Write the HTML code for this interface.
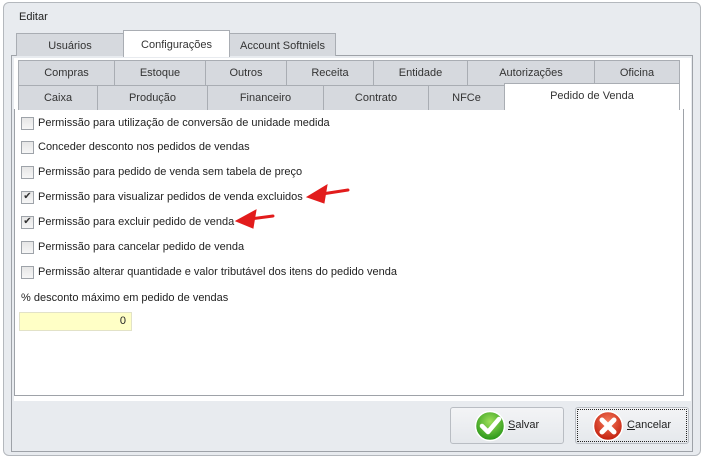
<!DOCTYPE html>
<html><head><meta charset="utf-8"><style>
*{margin:0;padding:0;box-sizing:border-box}
body{width:703px;height:459px;background:#fff;font-family:"Liberation Sans",sans-serif;font-size:11px;color:#222;position:relative;overflow:hidden}
.a{position:absolute}
.win{left:3px;top:2px;width:698px;height:454px;background:#e8ebef;border:1px solid #b4b8bd;border-radius:6px}
.tab{position:absolute;background:#d6d9de;border:1px solid #a9adb3;border-bottom:none;text-align:center;color:#333;font-size:11px}
.sel{background:#fff}
.cb{position:absolute;left:21px;width:13px;height:13px;border:1px solid #9ea3a9;background:linear-gradient(#e6e6e6,#f6f6f6)}
.lb{position:absolute;left:38px;font-size:11px;color:#222;white-space:nowrap}
.btn{position:absolute;top:407px;width:114px;height:37px;border:1px solid #b9bdc3;border-radius:3px;background:linear-gradient(#f3f4f6,#e5e8ec);font-size:11px}
</style></head><body>
<div class="a win"></div>
<div class="a" style="left:19px;top:11px;font-size:11px;color:#222">Editar</div>
<div class="a" style="left:11px;top:55px;width:682px;height:397px;border:1px solid #9ea2a8;background:#e8ebef"></div>
<div class="tab" style="left:16px;top:33px;width:108px;height:23px;line-height:24px">Usuários</div>
<div class="tab" style="left:229px;top:33px;width:107px;height:23px;line-height:24px">Account Softniels</div>
<div class="tab sel" style="left:123px;top:30px;width:107px;height:27px;line-height:28px;z-index:2">Configurações</div>
<div class="a" style="left:14px;top:58px;width:677px;height:343px;background:#fff"></div>
<div class="a" style="left:14px;top:109px;width:670px;height:287px;border:1px solid #9ea2a8;border-top:none;background:#fff"></div>
<div class="tab" style="left:18px;top:60px;width:97px;height:25px;line-height:25px">Compras</div>
<div class="tab" style="left:114px;top:60px;width:92px;height:25px;line-height:25px">Estoque</div>
<div class="tab" style="left:205px;top:60px;width:82px;height:25px;line-height:25px">Outros</div>
<div class="tab" style="left:286px;top:60px;width:88px;height:25px;line-height:25px">Receita</div>
<div class="tab" style="left:373px;top:60px;width:95px;height:25px;line-height:25px">Entidade</div>
<div class="tab" style="left:467px;top:60px;width:128px;height:25px;line-height:25px">Autorizações</div>
<div class="tab" style="left:594px;top:60px;width:86px;height:25px;line-height:25px">Oficina</div>
<div class="tab" style="left:18px;top:85px;width:80px;height:25px;line-height:25px">Caixa</div>
<div class="tab" style="left:97px;top:85px;width:111px;height:25px;line-height:25px">Produção</div>
<div class="tab" style="left:207px;top:85px;width:117px;height:25px;line-height:25px">Financeiro</div>
<div class="tab" style="left:323px;top:85px;width:106px;height:25px;line-height:25px">Contrato</div>
<div class="tab" style="left:428px;top:85px;width:77px;height:25px;line-height:25px">NFCe</div>
<div class="tab sel" style="left:504px;top:83px;width:176px;height:27px;line-height:25px;border-right:1px solid #a9adb3">Pedido de Venda</div>
<div class="cb" style="top:117px"></div><div class="lb" style="top:117px">Permissão para utilização de conversão de unidade medida</div>
<div class="cb" style="top:141px"></div><div class="lb" style="top:141px">Conceder desconto nos pedidos de vendas</div>
<div class="cb" style="top:166px"></div><div class="lb" style="top:166px">Permissão para pedido de venda sem tabela de preço</div>
<div class="cb" style="top:191px;font-size:10px;line-height:10px;text-align:center;color:#333">✔</div><div class="lb" style="top:191px">Permissão para visualizar pedidos de venda excluidos</div>
<div class="cb" style="top:216px;font-size:10px;line-height:10px;text-align:center;color:#333">✔</div><div class="lb" style="top:216px">Permissão para excluir pedido de venda</div>
<div class="cb" style="top:241px"></div><div class="lb" style="top:241px">Permissão para cancelar pedido de venda</div>
<div class="cb" style="top:266px"></div><div class="lb" style="top:266px">Permissão alterar quantidade e valor tributável dos itens do pedido venda</div>
<div class="a" style="left:21px;top:292px">% desconto máximo em pedido de vendas</div>
<div class="a" style="left:19px;top:312px;width:113px;height:19px;background:#ffffc6;border:1px solid #e2e2c8;text-align:right;padding-right:5px;line-height:17px">0</div>
<svg class="a" style="left:0;top:0" width="703" height="459">
<g fill="#e21c1c" stroke="#e21c1c" stroke-linecap="round">
<line x1="322" y1="194" x2="348" y2="190" stroke-width="3"/>
<polygon points="307,197 327,185 324,203" stroke-width="1"/>
<line x1="250" y1="219" x2="273" y2="216" stroke-width="3"/>
<polygon points="236,221 256,210 253,228" stroke-width="1"/>
</g>
</svg>
<div class="btn" style="left:450px"></div>
<div class="btn" style="left:575px;outline:1px dotted #222;outline-offset:-3px"></div>
<svg class="a" style="left:474px;top:410px" width="32" height="32">
<defs><radialGradient id="g" cx="50%" cy="35%" r="60%"><stop offset="0" stop-color="#9ee05a"/><stop offset="1" stop-color="#2f9a1c"/></radialGradient>
<radialGradient id="r" cx="50%" cy="35%" r="60%"><stop offset="0" stop-color="#f57a5a"/><stop offset="1" stop-color="#c52412"/></radialGradient></defs>
<circle cx="16" cy="16" r="14.5" fill="url(#g)" stroke="#fff" stroke-width="1.5"/>
<path d="M8 16 L14 22 L25 9" fill="none" stroke="#fff" stroke-width="4.5" stroke-linecap="round" stroke-linejoin="round"/>
</svg>
<div class="a" style="left:508px;top:419px;font-size:11px"><u>S</u>alvar</div>
<svg class="a" style="left:592px;top:410px" width="32" height="32">
<circle cx="16" cy="16" r="14.5" fill="url(#r)" stroke="#fff" stroke-width="1.5"/>
<path d="M10 10 L22 22 M22 10 L10 22" stroke="#fff" stroke-width="5" stroke-linecap="round"/>
</svg>
<div class="a" style="left:627px;top:419px;font-size:11px"><u>C</u>ancelar</div>
</body></html>
